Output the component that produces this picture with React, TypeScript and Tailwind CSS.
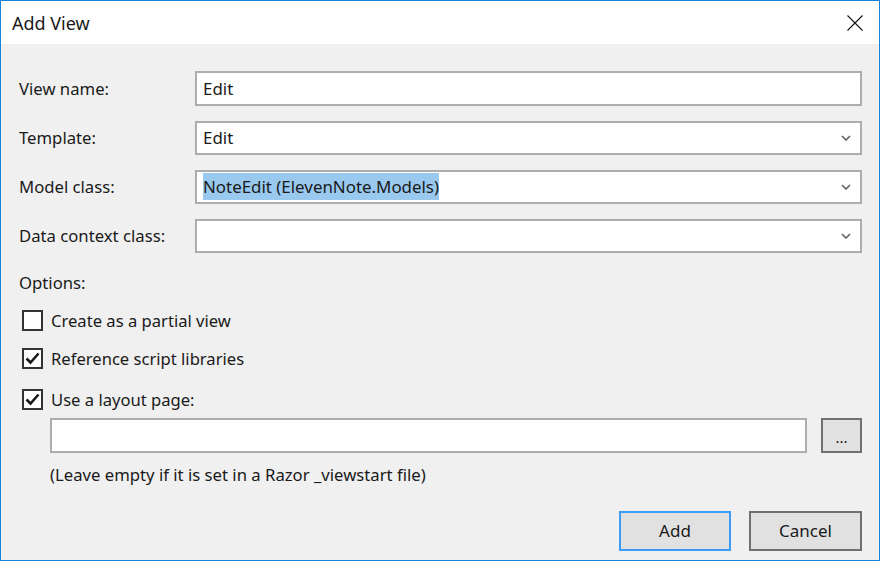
const font = { fontFamily: '"Noto Sans", "Liberation Sans", sans-serif' };

function Chevron() {
  return (
    <svg width="10" height="6" viewBox="0 0 10 6" className="text-[#606060]">
      <path d="M1 1 L5 5 L9 1" fill="none" stroke="currentColor" strokeWidth="1.6" />
    </svg>
  );
}

function CloseIcon() {
  return (
    <svg width="16" height="16" viewBox="0 0 16 16">
      <path d="M0.5 0.5 L15.5 15.5 M15.5 0.5 L0.5 15.5" stroke="#111111" strokeWidth="1.1" />
    </svg>
  );
}

function Checkbox({ checked }: { checked: boolean }) {
  return (
    <div className="flex h-[21px] w-[21px] items-center justify-center border-2 border-[#333333] bg-white">
      {checked && (
        <svg width="15" height="13" viewBox="0 0 15 13">
          <path d="M1.5 6.5 L5.5 10.5 L13.5 1.5" fill="none" stroke="#1a1a1a" strokeWidth="2.6" />
        </svg>
      )}
    </div>
  );
}

function FieldRow({
  label,
  children,
  className = "",
}: {
  label: string;
  children: React.ReactNode;
  className?: string;
}) {
  return (
    <div className={`flex items-center ${className}`}>
      <div className="w-[176px] shrink-0 text-[16.7px] leading-[22px] text-[#1a1a1a]">{label}</div>
      <div className="flex-1">{children}</div>
    </div>
  );
}

function Combo({ value, selected }: { value?: string; selected?: boolean }) {
  return (
    <div className="flex h-[34px] items-center border-2 border-[#adadad] bg-white pl-[6px] pr-[9px]">
      <div className="flex-1 text-[16.9px] leading-[22px] text-[#1a1a1a]">
        {value && (
          <span className={selected ? "bg-[#99c9ef] py-[2px]" : ""}>{value}</span>
        )}
      </div>
      <Chevron />
    </div>
  );
}

function CheckRow({ checked, label, className }: { checked: boolean; label: string; className: string }) {
  return (
    <div className={`flex h-[21px] items-center gap-[8px] pl-[3px] text-[16.6px] leading-[21px] text-[#1a1a1a] ${className}`}>
      <Checkbox checked={checked} />
      <span>{label}</span>
    </div>
  );
}

export default function App() {
  return (
    <div
      className="flex h-[561px] w-[880px] flex-col border border-[#1883d7] bg-[#f0f0f0]"
      style={font}
    >
      {/* title bar */}
      <div className="flex h-[43px] shrink-0 items-center justify-between bg-white pl-[11px] pr-[16px]">
        <span className="text-[18px] leading-[24px] text-[#1a1a1a]">Add View</span>
        <CloseIcon />
      </div>

      <div className="flex flex-1 flex-col pl-[18px] pr-[17px]">
        <FieldRow label="View name:" className="mt-[27px]">
          <div className="flex h-[35px] items-center border-2 border-[#adadad] bg-white pl-[6px] text-[16.9px] leading-[22px] text-[#1a1a1a]">
            Edit
          </div>
        </FieldRow>
        <FieldRow label="Template:" className="mt-[15px]">
          <Combo value="Edit" />
        </FieldRow>
        <FieldRow label="Model class:" className="mt-[15px]">
          <Combo value="NoteEdit (ElevenNote.Models)" selected />
        </FieldRow>
        <FieldRow label="Data context class:" className="mt-[15px]">
          <Combo />
        </FieldRow>

        <div className="mt-[20px] h-[20px] text-[16.7px] leading-[20px] text-[#1a1a1a]">Options:</div>

        <CheckRow checked={false} label="Create as a partial view" className="mt-[17px]" />
        <CheckRow checked label="Reference script libraries" className="mt-[17px]" />
        <CheckRow checked label="Use a layout page:" className="mt-[20px]" />

        <div className="mt-[8px] flex items-center pl-[31px]">
          <div className="h-[35px] flex-1 border-2 border-[#adadad] bg-white" />
          <div className="ml-[14px] flex h-[35px] w-[41px] items-end justify-center border-2 border-[#707070] bg-[#e1e1e1] pb-[6px] text-[15px] leading-[15px] text-[#1a1a1a]">
            ...
          </div>
        </div>
        <div className="mt-[12px] h-[20px] pl-[31px] text-[16.7px] leading-[20px] text-[#1a1a1a]">
          (Leave empty if it is set in a Razor _viewstart file)
        </div>

        <div className="mt-[26px] flex justify-end gap-[18px]">
          <button className="h-[40px] w-[112px] border-2 border-[#3c9bf2] bg-[#e1e1e1] text-[17px] text-[#1a1a1a]">
            Add
          </button>
          <button className="h-[40px] w-[113px] border-2 border-[#707070] bg-[#e1e1e1] text-[17px] text-[#1a1a1a]">
            Cancel
          </button>
        </div>
      </div>
    </div>
  );
}
